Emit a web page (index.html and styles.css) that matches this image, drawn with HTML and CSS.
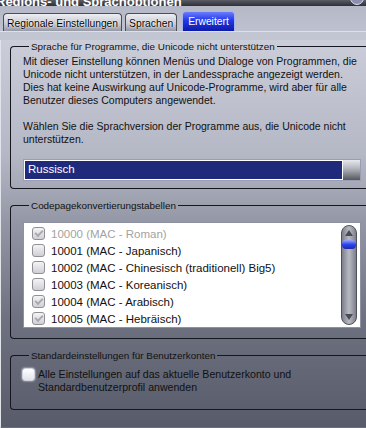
FILE: index.html
```html
<!DOCTYPE html>
<html lang="de">
<head>
	<meta charset="UTF-8">
	<title>Regions- und Sprachoptionen</title>
	<link rel="stylesheet" href="styles.css">
</head>
<body>
	<div class="window">
		<div class="titlebar"><span class="title">Regions- und Sprachoptionen</span><span class="close"></span></div>
		<div class="tabs">
			<div class="tab">Regionale Einstellungen</div>
			<div class="tab">Sprachen</div>
			<div class="tab active">Erweitert</div>
		</div>
		<div class="panel">
			<fieldset class="group g1">
				<legend>Sprache für Programme, die Unicode nicht unterstützen</legend>
				<p>Mit dieser Einstellung können Menüs und Dialoge von Programmen, die Unicode nicht unterstützen, in der Landessprache angezeigt werden. Dies hat keine Auswirkung auf Unicode-Programme, wird aber für alle Benutzer dieses Computers angewendet.</p>
				<p>Wählen Sie die Sprachversion der Programme aus, die Unicode nicht unterstützen.</p>
				<div class="combo">
					<div class="combo-field">Russisch</div>
					<div class="combo-btn"></div>
				</div>
			</fieldset>
			<fieldset class="group g2">
				<legend>Codepagekonvertierungstabellen</legend>
				<div class="listbox">
					<ul class="items">
						<li class="disabled"><span class="cb checked"></span>10000 (MAC - Roman)</li>
						<li><span class="cb"></span>10001 (MAC - Japanisch)</li>
						<li><span class="cb"></span>10002 (MAC - Chinesisch (traditionell) Big5)</li>
						<li><span class="cb"></span>10003 (MAC - Koreanisch)</li>
						<li><span class="cb checked"></span>10004 (MAC - Arabisch)</li>
						<li><span class="cb checked"></span>10005 (MAC - Hebräisch)</li>
					</ul>
					<div class="scrollbar">
						<span class="arrow up"></span>
						<span class="thumb"></span>
						<span class="arrow down"></span>
					</div>
				</div>
			</fieldset>
			<fieldset class="group g3">
				<legend>Standardeinstellungen für Benutzerkonten</legend>
				<div class="option">
					<span class="cb bright"></span>
					<span>Alle Einstellungen auf das aktuelle Benutzerkonto und Standardbenutzerprofil anwenden</span>
				</div>
			</fieldset>
		</div>
	</div>
</body>
</html>
```
FILE: styles.css
```css
*{margin: 0;padding: 0;box-sizing: border-box;}
html,body {height: 100%;overflow: hidden;background: #c2c5d2;}
body {font-family: "Liberation Sans", Arial, sans-serif;font-size: 10.5px;color: #111;}

.titlebar {height: 6px;overflow: hidden;background: linear-gradient(#5a5c66, #2e3038);display: flex;justify-content: space-between;}
.titlebar .title {color: #fff;font-weight: bold;font-size: 13px;line-height: 3px;margin-left: -4px;}
.titlebar .close {width: 14px;height: 14px;border-radius: 50%;margin: -9px 2px 0 0;background: #8c8fb0;border: 1px solid #e0e0f0;}

.tabs {display: flex;align-items: flex-end;gap: 3px;height: 26px;padding-left: 3px;background: linear-gradient(#b5b8c6, #bec1ce);border-bottom: 1px solid #dde0ea;}
.tab {height: 18px;padding: 1px 3px 0;line-height: 17px;font-size: 10.3px;color: #000;text-shadow: 0 0 2px #fff, 0 0 1px #fff;border: 1px solid #4a4c56;border-bottom: none;border-radius: 4px 4px 0 0;background: linear-gradient(#eceef2, #c9cbd3 55%, #9598a5);}
.tab.active {height: 20px;margin-left: 2px;padding: 1px 5px 0;line-height: 17px;color: #fff;text-shadow: none;border-color: #a6b4f0;background: linear-gradient(#6a7cff, #2337e6 45%, #0d1aa8);}

.panel {height: 389px;padding: 0 0 0 9px;border-left: 1px solid #e2e4ec;background: linear-gradient(#cbced9, #b4b7c4 30%, #9296a4 48%, #6e7280 72%, #575b6a);border-bottom: 2px solid #6a6e7c;}

.group {border: 1px solid #16161e;border-right: none;border-radius: 4px 0 0 4px;padding: 0 0 0 12px;}
.group legend {margin-left: 6px;padding: 0 2px;line-height: 13px;font-size: 9.9px;}
.g1 {height: 149px;margin-top: 8px;}
.g2 {height: 140px;margin-top: 10px;}
.g3 {height: 61px;margin-top: 10px;}

.g1 p {line-height: 13px;margin-top: 2px;width: 338px;}
.g1 p + p {margin-top: 13px;}

.combo {display: flex;width: 338px;height: 22px;margin-top: 13px;border: 1px solid #9a9eb0;}
.combo-field {flex: 1;border: 1px solid #fff;background: #1f2a7a;color: #fff;line-height: 17px;padding-left: 3px;font-size: 11.5px;}
.combo-btn {width: 17px;background: linear-gradient(#e8e9ee, #a9abb4 50%, #55575f);}

.listbox {display: flex;width: 338px;height: 106px;margin-top: 10px;background: #fff;border: 1px solid #8d91a0;padding: 1px;}
.items {flex: 1;list-style: none;padding: 1px 0 0 7px;}
.items li {height: 17px;line-height: 16px;display: flex;align-items: center;gap: 6px;font-size: 11.5px;}
.items li.disabled {color: #a3a3a3;}

.cb {width: 13px;height: 13px;border: 1px solid #8f8f96;border-radius: 3px;background: linear-gradient(#f4f4f6, #cfd0d6);display: inline-flex;align-items: center;justify-content: center;flex: none;}
.cb.checked::after {content: "";width: 6px;height: 3px;border-left: 2px solid #a9aab0;border-bottom: 2px solid #a9aab0;transform: rotate(-45deg);margin-top: -2px;}
.cb.bright {background: linear-gradient(#ffffff, #e2e3ea);border-color: #d0d2dc;box-shadow: 0 0 2px #f0f0ff;}

.scrollbar {width: 16px;margin: 1px 2px 1px 0;border: 1px solid #4e5158;border-radius: 8px;background: linear-gradient(90deg, #7c7f8a, #b8bac3 50%, #7c7f8a);display: flex;flex-direction: column;align-items: center;}
.arrow {width: 0;height: 0;border-left: 4px solid transparent;border-right: 4px solid transparent;margin-top: 4px;}
.arrow.up {border-bottom: 6px solid #4a4c55;}
.arrow.down {border-top: 6px solid #4a4c55;margin-top: auto;margin-bottom: 4px;}
.thumb {width: 14px;height: 9px;margin-top: 4px;border-radius: 4px;background: linear-gradient(#9aa6ff, #2d44e8 50%, #1a2ab0);}

.option {display: flex;gap: 3px;margin-top: 6px;margin-left: -1px;}
.option span + span {line-height: 13px;width: 290px;font-size: 10.6px;}
```
